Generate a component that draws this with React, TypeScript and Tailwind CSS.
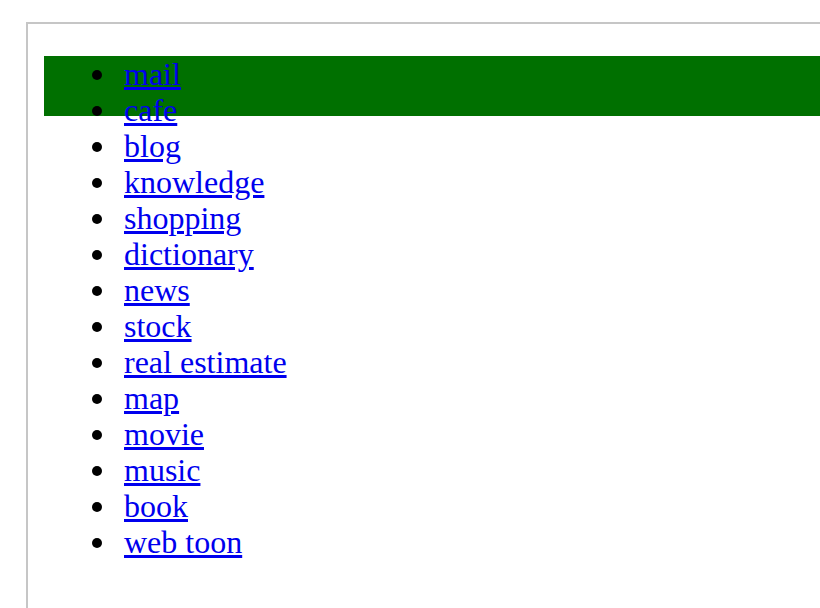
import React from "react";

const items = [
  "mail",
  "cafe",
  "blog",
  "knowledge",
  "shopping",
  "dictionary",
  "news",
  "stock",
  "real estimate",
  "map",
  "movie",
  "music",
  "book",
  "web toon",
];

export default function App() {
  return (
    <div className="w-[820px] h-[608px] overflow-hidden bg-white" style={{ fontFamily: '"Liberation Serif", "Times New Roman", serif' }}>
      <div className="ml-[26px] mt-[22px] w-[1000px] h-[800px] border-2 border-[#c6c6c6] pt-[32px] pl-[16px]">
        <div className="h-[60px] bg-[#007000]">
          <ul className="list-none pl-[48px] text-[32px] leading-[36px] text-black">
            {items.map((t) => (
              <li key={t} className="flex items-center">
                <span className="w-[10px] h-[10px] rounded-full bg-black mr-[22px] mt-[2px] shrink-0" />
                <a href="#" className="text-[#0000ee] underline">
                  {t}
                </a>
              </li>
            ))}
          </ul>
        </div>
      </div>
    </div>
  );
}
